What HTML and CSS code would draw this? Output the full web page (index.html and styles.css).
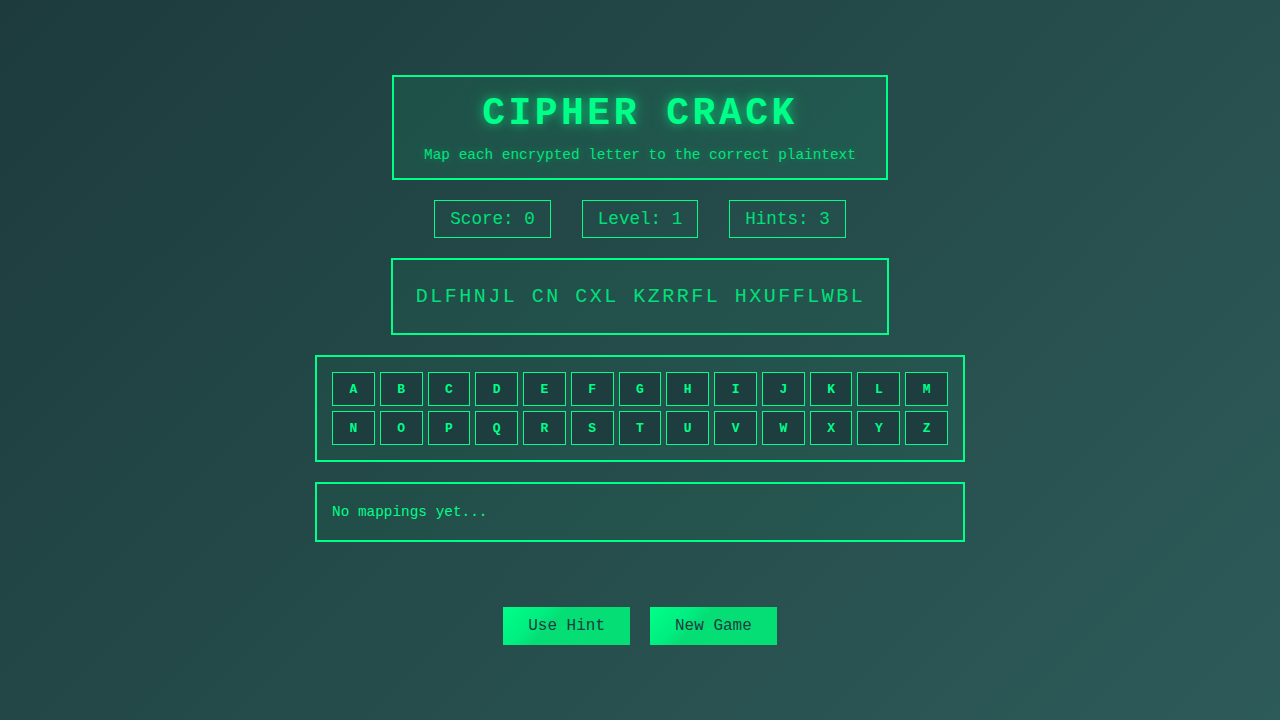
FILE: index.html
```html
<!DOCTYPE html>
<html lang="en">
<head>
<meta charset="utf-8">
<title>Cipher Crack</title>
<link rel="stylesheet" href="styles.css">
</head>
<body>
<main class="game">
  <header class="header">
    <h1 class="title">CIPHER CRACK</h1>
    <p class="subtitle">Map each encrypted letter to the correct plaintext</p>
  </header>

  <div class="stats">
    <div class="stat">Score: 0</div>
    <div class="stat">Level: 1</div>
    <div class="stat">Hints: 3</div>
  </div>

  <div class="cipher">DLFHNJL CN CXL KZRRFL HXUFFLWBL</div>

  <div class="keyboard">
    <button class="key">A</button><button class="key">B</button><button class="key">C</button><button class="key">D</button><button class="key">E</button><button class="key">F</button><button class="key">G</button><button class="key">H</button><button class="key">I</button><button class="key">J</button><button class="key">K</button><button class="key">L</button><button class="key">M</button>
    <button class="key">N</button><button class="key">O</button><button class="key">P</button><button class="key">Q</button><button class="key">R</button><button class="key">S</button><button class="key">T</button><button class="key">U</button><button class="key">V</button><button class="key">W</button><button class="key">X</button><button class="key">Y</button><button class="key">Z</button>
  </div>

  <div class="mappings">No mappings yet...</div>

  <div class="actions">
    <button class="action">Use Hint</button>
    <button class="action">New Game</button>
  </div>
</main>
</body>
</html>
```

FILE: styles.css
```css
* { box-sizing: border-box; }

html, body {
  margin: 0;
  height: 100%;
}

body {
  background: linear-gradient(135deg, #1d3b3c 0%, #2d5b59 100%);
  color: #00ff88;
  font-family: "Courier New", "Liberation Mono", monospace;
  display: flex;
  align-items: center;
  justify-content: center;
  min-height: 100vh;
}

.game {
  display: flex;
  flex-direction: column;
  align-items: center;
  width: 650px;
}

.header {
  border: 2px solid #00ff88;
  background: rgba(0, 255, 136, 0.08);
  padding: 15px 30px;
  text-align: center;
}

.title {
  margin: 0 0 12px;
  font-size: 38px;
  font-weight: bold;
  letter-spacing: 3.5px;
  line-height: normal;
  color: #00ff88;
  text-shadow: 0 0 10px rgba(0, 255, 136, 0.55), 0 0 20px rgba(0, 255, 136, 0.3);
}

.subtitle {
  margin: 0;
  font-size: 14.4px;
  color: #00e67d;
  text-shadow: 0 0 8px rgba(0, 255, 136, 0.3);
}

.stats {
  display: flex;
  gap: 31px;
  margin-top: 20px;
}

.stat {
  border: 1px solid #00ff88;
  padding: 8px 15px;
  font-size: 17.6px;
  line-height: 20px;
  color: #00e07a;
  background: rgba(0, 255, 136, 0.02);
}

.cipher {
  margin-top: 20px;
  border: 2px solid #00ff88;
  background: rgba(0, 255, 136, 0.04);
  padding: 25px 22px 25px 23px;
  font-size: 20px;
  letter-spacing: 2.5px;
  line-height: 23px;
  color: #00e07a;
}

.keyboard {
  margin-top: 20px;
  width: 650px;
  border: 2px solid #00ff88;
  background: rgba(0, 255, 136, 0.03);
  padding: 15px;
  display: grid;
  grid-template-columns: repeat(13, 1fr);
  gap: 5px;
}

.key {
  height: 34px;
  border: 1px solid #00ff88;
  background: #1e3d3e;
  color: #00ff88;
  font-family: inherit;
  font-weight: bold;
  font-size: 13px;
  padding: 0;
  cursor: pointer;
}

.mappings {
  margin-top: 20px;
  width: 650px;
  height: 60px;
  border: 2px solid #00ff88;
  background: rgba(0, 255, 136, 0.03);
  padding: 0 15px;
  display: flex;
  align-items: center;
  font-size: 14.4px;
  color: #00ff88;
}

.actions {
  display: flex;
  gap: 20px;
  margin-top: 65px;
}

.action {
  border: none;
  background: linear-gradient(135deg, #00ff88 0%, #00ee80 28%, #05dd75 40%, #05dd75 100%);
  color: #1e3d3e;
  font-family: inherit;
  font-size: 16px;
  padding: 10px 25px;
  line-height: 18px;
  cursor: pointer;
}
```
